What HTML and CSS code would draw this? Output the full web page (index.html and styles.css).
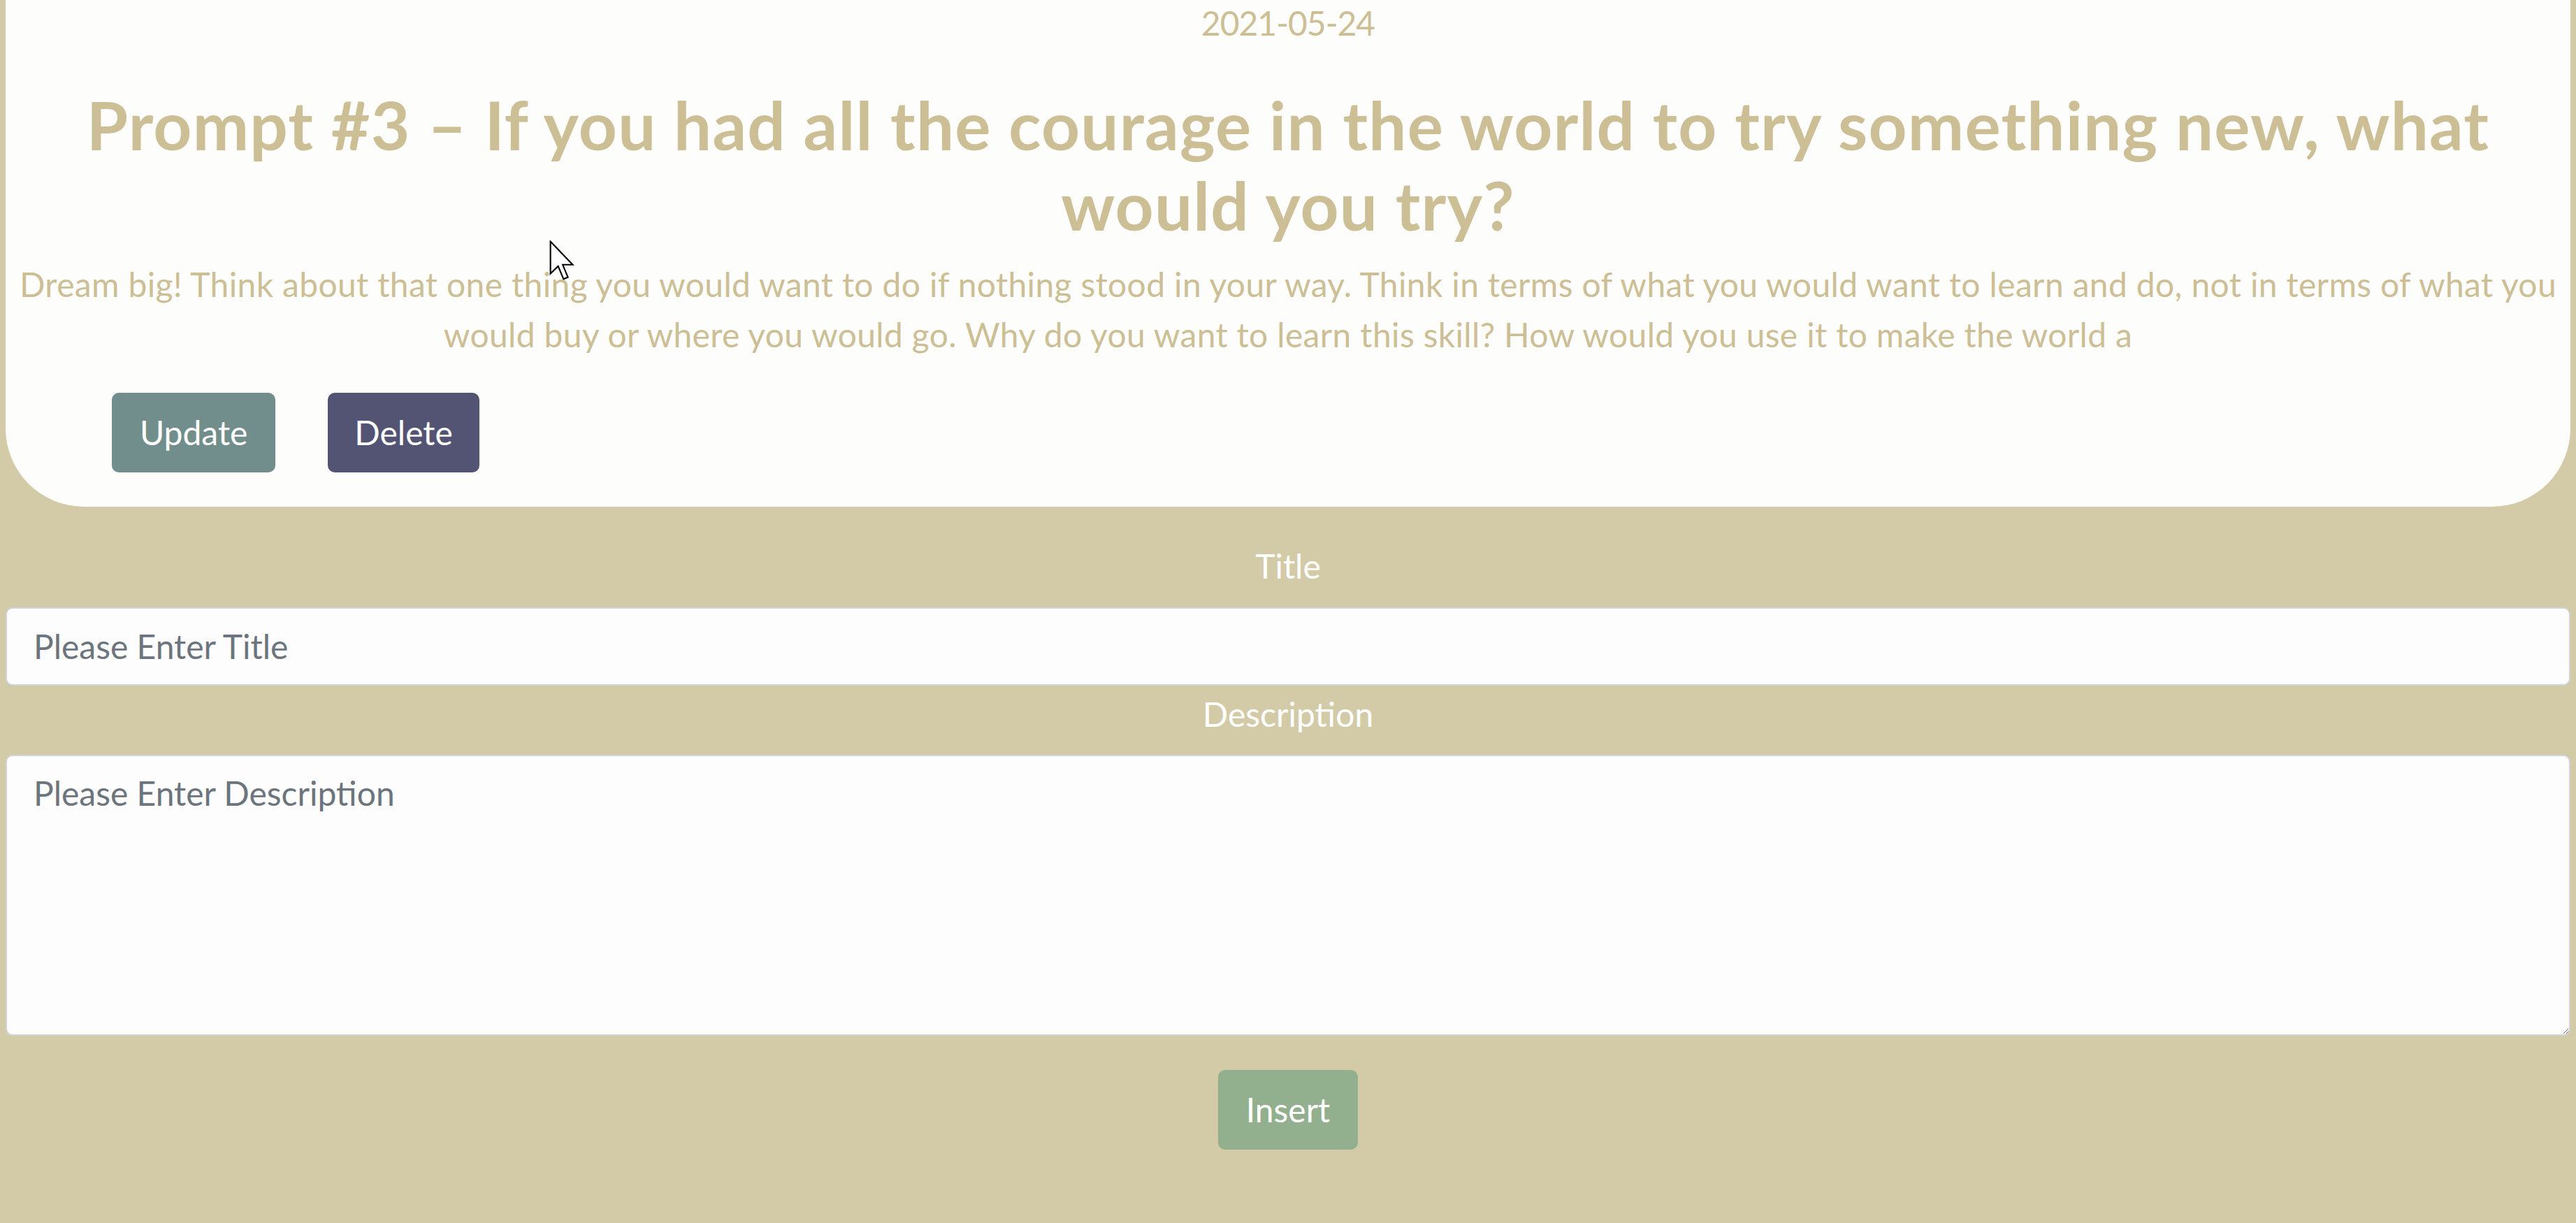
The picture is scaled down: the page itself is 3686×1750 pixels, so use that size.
FILE: index.html
```html
<!DOCTYPE html>
<html lang="en">
<head>
<meta charset="utf-8">
<title>Prompts</title>
<link rel="stylesheet" href="styles.css">
</head>
<body>
<main class="page">
  <section class="card">
    <p class="date">2021-05-24</p>
    <h1 class="prompt-title">Prompt #3 – If you had all the courage in the world to try something new, what would you try?</h1>
    <p class="prompt-desc">Dream big! Think about that one thing you would want to do if nothing stood in your way. Think in terms of what you would want to learn and do, not in terms of what you would buy or where you would go. Why do you want to learn this skill? How would you use it to make the world a</p>
    <div class="actions">
      <button class="btn btn-update">Update</button>
      <button class="btn btn-delete">Delete</button>
    </div>
  </section>

  <form class="entry-form">
    <label class="field-label label-title" for="title">Title</label>
    <input class="field" id="title" type="text" placeholder="Please Enter Title">
    <label class="field-label label-desc" for="desc">Description</label>
    <textarea class="field field-area" id="desc" placeholder="Please Enter Description"></textarea>
    <div class="submit-row">
      <button type="button" class="btn btn-insert">Insert</button>
    </div>
  </form>
</main>
<svg class="cursor" width="36" height="58" viewBox="0 0 12 19.5" aria-hidden="true">
  <path d="M0.5 0.5 L0.5 16 L4.2 12.4 L6.8 18.6 L8.9 17.7 L6.4 11.7 L11.2 11.7 Z" fill="#fff" stroke="#000" stroke-width="0.7" stroke-linejoin="miter"/>
</svg>
</body>
</html>
```
FILE: styles.css
```css
html, body {
  margin: 0;
  padding: 0;
}
body {
  background: #d3caa7;
  font-family: Lato, "Open Sans", "Liberation Sans", sans-serif;
  overflow: hidden;
  position: relative;
}
.page {
  padding: 0 8px;
}
.card {
  background: #fdfdfc;
  border-radius: 0 0 112px 112px;
  padding: 0 12px 49px;
  text-align: center;
  color: #cdbf95;
}
.date {
  margin: 0;
  font-size: 48px;
  line-height: 66px;
  letter-spacing: -1px;
}
.prompt-title {
  margin: 54px 0 21px;
  font-size: 96px;
  line-height: 115px;
  font-weight: 700;
  letter-spacing: 1.2px;
}
.prompt-desc {
  margin: 0 0 47px;
  font-size: 48px;
  line-height: 72px;
  letter-spacing: 0.34px;
}
.actions {
  display: flex;
  gap: 75px;
  padding-left: 140px;
}
.btn {
  font-family: inherit;
  font-size: 48px;
  line-height: 72px;
  padding: 19px 38px;
  border: 2px solid transparent;
  border-radius: 10px;
  color: #fff;
  cursor: pointer;
}
.btn-update {
  background: #718e8d;
  border-color: #718e8d;
}
.btn-delete {
  background: #535473;
  border-color: #535473;
  padding: 19px 36px;
}
.entry-form {
  display: flex;
  flex-direction: column;
  padding-top: 49px;
}
.field-label {
  display: block;
  text-align: center;
  color: #fff;
  font-size: 48px;
  line-height: 72px;
}
.label-title {
  margin-bottom: 23px;
}
.label-desc {
  margin-top: 5px;
  margin-bottom: 22px;
}
.field {
  box-sizing: border-box;
  width: 100%;
  margin: 0;
  font-family: inherit;
  font-size: 48px;
  line-height: 72px;
  padding: 18px 38px;
  border: 2px solid #ced4da;
  border-radius: 10px;
  background: #fdfdfd;
  color: #495057;
}
.field::placeholder {
  color: #6c757d;
  opacity: 1;
}
.field-area {
  height: 402px;
  padding-top: 17px;
  resize: both;
  display: block;
}
.submit-row {
  display: flex;
  justify-content: center;
  margin-top: 49px;
}
.btn-insert {
  background: #92b08e;
  border-color: #92b08e;
}
.cursor {
  position: absolute;
  left: 786px;
  top: 344px;
  pointer-events: none;
}
```
